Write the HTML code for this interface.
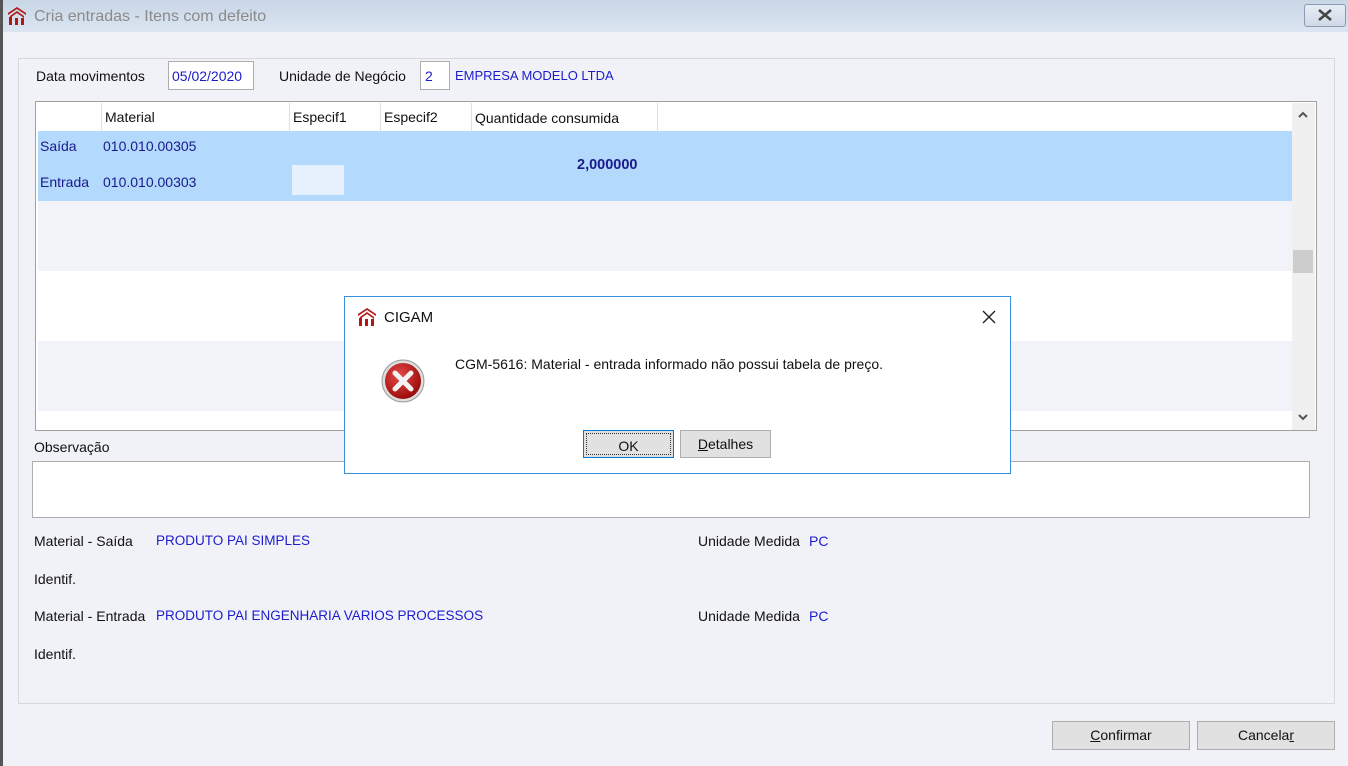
<!DOCTYPE html>
<html><head><meta charset="utf-8"><style>
*{margin:0;padding:0;box-sizing:border-box}
body{width:1348px;height:766px;overflow:hidden;background:#f1f2f8;font-family:"Liberation Sans",sans-serif;font-size:14px;color:#111;position:relative}
.a{position:absolute;white-space:nowrap}
.blue{color:#1c1ccc}
.btn{position:absolute;background:#e1e1e1;border:1px solid #adadad;text-align:center;line-height:26px;font-size:14px}
</style></head><body>
<div class="a" style="left:0;top:0;width:3px;height:766px;background:#555"></div>
<div class="a" style="left:3px;top:0;width:1345px;height:32px;background:linear-gradient(#c9d6e6,#dbe5f1)"></div>
<svg class="a" style="left:7px;top:6px" width="20" height="20" viewBox="0 0 20 20"><path d="M1 7L10 1L19 7V9L10 3L1 9Z" fill="#b01818"/><path d="M3 10L10 5L17 10V12L10 7L3 12Z" fill="#b01818"/><rect x="2" y="11" width="3" height="8" fill="#b01818"/><rect x="8" y="12" width="3" height="7" fill="#b01818"/><rect x="14" y="12" width="3" height="7" fill="#b01818"/></svg>
<div class="a" style="left:34px;top:8px;font-size:16px;color:#8a8a8a">Cria entradas - Itens com defeito</div>
<div class="a" style="left:1304px;top:4px;width:42px;height:23px;border:1px solid #8c9bb0;border-radius:3px;background:linear-gradient(#e6edf5,#cfd9e6)"></div>
<svg class="a" style="left:1316px;top:8px" width="18" height="14"><path d="M3 2L15 12M15 2L3 12" stroke="#444" stroke-width="2.5"/></svg>

<div class="a" style="left:18px;top:58px;width:1317px;height:646px;border:1px solid #d8d8dc"></div>
<div class="a" style="left:36px;top:68px">Data movimentos</div>
<div class="a" style="left:168px;top:61px;width:86px;height:29px;border:1px solid #adadad;background:#fff"></div>
<div class="a blue" style="left:172px;top:68px">05/02/2020</div>
<div class="a" style="left:279px;top:68px">Unidade de Negócio</div>
<div class="a" style="left:420px;top:61px;width:30px;height:29px;border:1px solid #adadad;background:#fff"></div>
<div class="a blue" style="left:425px;top:68px">2</div>
<div class="a blue" style="left:455px;top:68px;font-size:13px">EMPRESA MODELO LTDA</div>

<div class="a" style="left:35px;top:101px;width:1282px;height:330px;border:1px solid #a0a0a0;background:#fff"></div>
<div class="a" style="left:38px;top:131px;width:1254px;height:70px;background:#b3d9fd"></div>
<div class="a" style="left:292px;top:165px;width:52px;height:30px;background:#e6f1fd"></div>
<div class="a" style="left:38px;top:201px;width:1254px;height:70px;background:#f2f3f9"></div>
<div class="a" style="left:38px;top:341px;width:1254px;height:70px;background:#f2f3f9"></div>
<div class="a" style="left:101px;top:103px;width:1px;height:28px;background:#e0e0e0"></div>
<div class="a" style="left:289px;top:103px;width:1px;height:28px;background:#e0e0e0"></div>
<div class="a" style="left:380px;top:103px;width:1px;height:28px;background:#e0e0e0"></div>
<div class="a" style="left:471px;top:103px;width:1px;height:28px;background:#e0e0e0"></div>
<div class="a" style="left:657px;top:103px;width:1px;height:28px;background:#e0e0e0"></div>
<div class="a" style="left:105px;top:109px">Material</div>
<div class="a" style="left:293px;top:109px">Especif1</div>
<div class="a" style="left:384px;top:109px">Especif2</div>
<div class="a" style="left:475px;top:110px">Quantidade consumida</div>
<div class="a" style="left:40px;top:138px;color:#1a1a8c">Saída</div>
<div class="a" style="left:103px;top:138px;color:#1a1a8c">010.010.00305</div>
<div class="a" style="left:40px;top:174px;color:#1a1a8c">Entrada</div>
<div class="a" style="left:103px;top:174px;color:#1a1a8c">010.010.00303</div>
<div class="a" style="left:577px;top:157px;color:#1a1a8c;font-weight:bold;font-size:14.5px">2,000000</div>
<div class="a" style="left:1292px;top:103px;width:23px;height:327px;background:#f0f0f0"></div>
<div class="a" style="left:1293px;top:250px;width:20px;height:23px;background:#cdcdcd"></div>
<svg class="a" style="left:1297px;top:412px" width="12" height="10"><path d="M2 3L6 7L10 3" stroke="#555" stroke-width="2" fill="none"/></svg>
<svg class="a" style="left:1297px;top:110px" width="12" height="10"><path d="M2 7L6 3L10 7" stroke="#555" stroke-width="2" fill="none"/></svg>

<div class="a" style="left:34px;top:439px">Observação</div>
<div class="a" style="left:32px;top:461px;width:1278px;height:57px;border:1px solid #adadad;background:#fff"></div>

<div class="a" style="left:34px;top:533px">Material - Saída</div>
<div class="a blue" style="left:156px;top:533px;font-size:13.5px">PRODUTO PAI SIMPLES</div>
<div class="a" style="left:698px;top:533px">Unidade Medida</div>
<div class="a blue" style="left:809px;top:533px">PC</div>
<div class="a" style="left:34px;top:571px">Identif.</div>
<div class="a" style="left:34px;top:608px">Material - Entrada</div>
<div class="a blue" style="left:156px;top:608px;font-size:13.5px">PRODUTO PAI ENGENHARIA VARIOS PROCESSOS</div>
<div class="a" style="left:698px;top:608px">Unidade Medida</div>
<div class="a blue" style="left:809px;top:608px">PC</div>
<div class="a" style="left:34px;top:646px">Identif.</div>

<div class="btn" style="left:1052px;top:721px;width:138px;height:29px"><u>C</u>onfirmar</div>
<div class="btn" style="left:1197px;top:721px;width:138px;height:29px">Cancela<u>r</u></div>

<div class="a" style="left:344px;top:296px;width:667px;height:178px;background:#fff;border:1px solid #3c8ee0"></div>
<svg class="a" style="left:357px;top:307px" width="20" height="20" viewBox="0 0 20 20"><path d="M1 7L10 1L19 7V9L10 3L1 9Z" fill="#b01818"/><path d="M3 10L10 5L17 10V12L10 7L3 12Z" fill="#b01818"/><rect x="2" y="11" width="3" height="8" fill="#b01818"/><rect x="8" y="12" width="3" height="7" fill="#b01818"/><rect x="14" y="12" width="3" height="7" fill="#b01818"/></svg>
<div class="a" style="left:384px;top:309px;font-size:15px">CIGAM</div>
<svg class="a" style="left:981px;top:309px" width="16" height="16"><path d="M2 2L14 14M14 2L2 14" stroke="#222" stroke-width="1.4"/></svg>
<svg class="a" style="left:380px;top:358px" width="46" height="46" viewBox="0 0 46 46"><defs><radialGradient id="g" cx="40%" cy="35%" r="65%"><stop offset="0" stop-color="#e84a4a"/><stop offset="1" stop-color="#9c0c0c"/></radialGradient></defs><circle cx="23" cy="23" r="21" fill="#ddd" stroke="#999"/><circle cx="23" cy="23" r="18" fill="url(#g)"/><path d="M15 15L31 31M31 15L15 31" stroke="#f4f4f4" stroke-width="5" stroke-linecap="round"/></svg>
<div class="a" style="left:455px;top:356px">CGM-5616: Material - entrada informado não possui tabela de preço.</div>
<div class="btn" style="left:583px;top:430px;width:91px;height:28px;border:1px solid #0078d7;line-height:24px"><div style="margin:2px;border:1px dotted #333;height:22px">OK</div></div>
<div class="btn" style="left:680px;top:430px;width:91px;height:28px"><u>D</u>etalhes</div>
</body></html>
